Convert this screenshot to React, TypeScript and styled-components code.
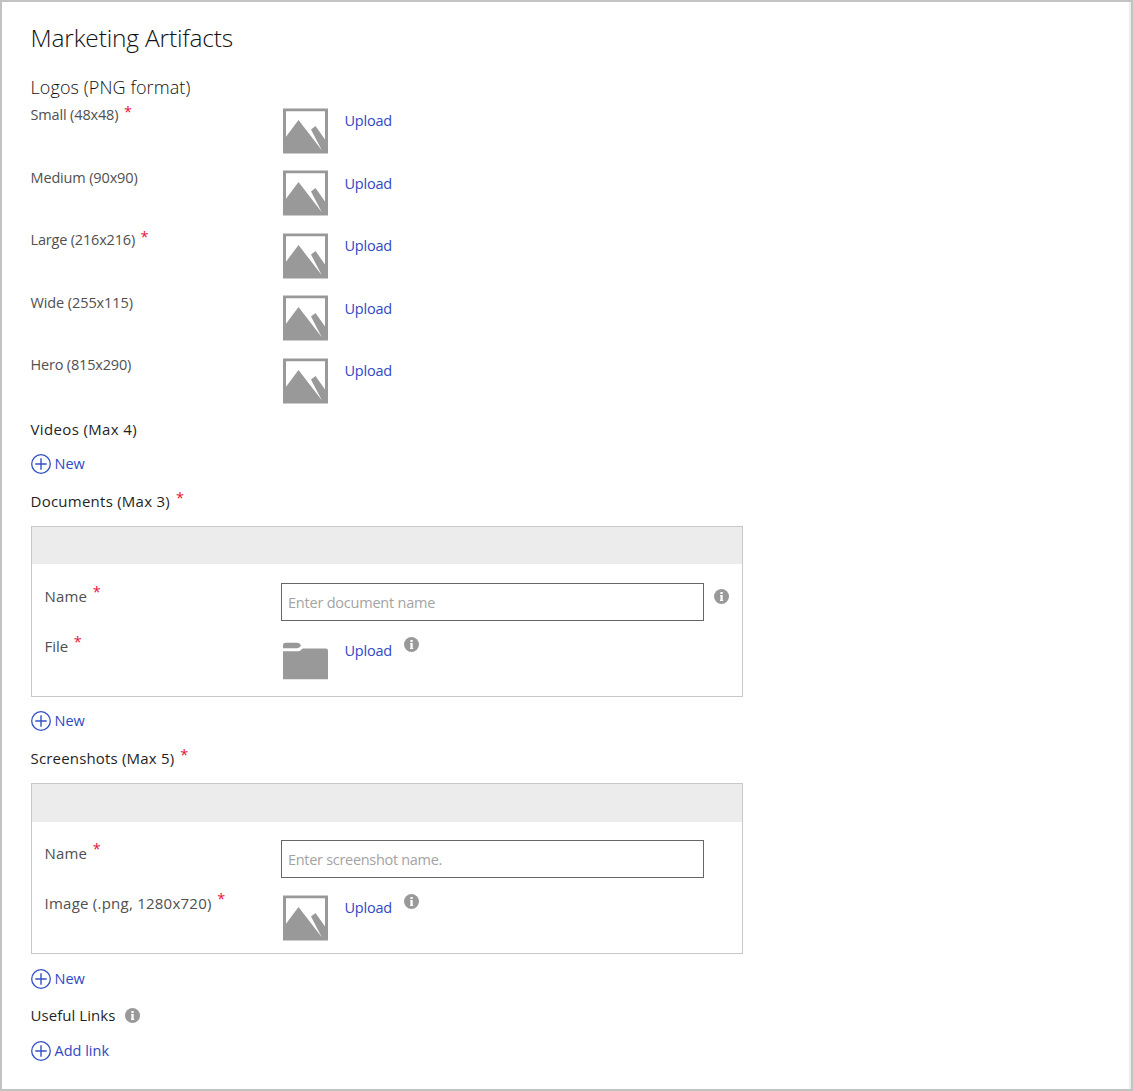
import React from "react";
import styled, { createGlobalStyle } from "styled-components";

const Global = createGlobalStyle`
  * { box-sizing: border-box; }
  body { margin: 0; background: #fff; }
`;

const Page = styled.main`
  width: 1133px;
  height: 1091px;
  border: 2px solid #c3c3c3;
  box-shadow: inset -2px 0 0 #ededed;
  padding: 19px 0 0 29px;
  font-family: "Open Sans", "Noto Sans", sans-serif;
  font-size: 15px;
  color: #1f1f1f;
`;

const Title = styled.h1`
  margin: 0 0 0 -0.5px;
  height: 34px;
  line-height: 34px;
  font-size: 24.5px;
  font-weight: 300;
  letter-spacing: -0.17px;
  color: #111;
  white-space: nowrap;
`;

const Subtitle = styled.h2`
  margin: 20px 0 0 -0.5px;
  height: 24px;
  line-height: 24px;
  font-size: 18px;
  font-weight: 300;
  letter-spacing: 0.1px;
  color: #111;
`;

const Label = styled.span<{ $track?: number }>`
  margin-left: -0.5px;
  line-height: 20px;
  white-space: nowrap;
  color: #505050;
  font-size: 14.5px;
  letter-spacing: ${(p) => p.$track ?? 0}px;
`;

const HeadingLabel = styled(Label)`
  color: #1f1f1f;
  font-size: 15px;
`;

const FieldLabel = styled(Label)`
  font-size: 15px;
`;

const Star = styled.span<{ $gap?: number; $lift?: number }>`
  margin: -${(p) => p.$lift ?? 3}px 0 0 ${(p) => p.$gap ?? 5.5}px;
  line-height: 20px;
  font-size: 14.5px;
  font-weight: 400;
  color: #e8113a;
`;

const LogoList = styled.div`
  padding-top: 8.9px;
`;

const LogoRow = styled.div`
  display: flex;
  height: 62.5px;
`;

const LabelCell = styled.div<{ $width: number }>`
  display: flex;
  align-items: flex-start;
  width: ${(p) => p.$width}px;
`;

const LogoLabelCell = styled(LabelCell)`
  margin-top: -2.6px;
`;

const Link = styled.a`
  margin-left: -0.5px;
  color: #3048c4;
  font-size: 14.5px;
  line-height: 20px;
  white-space: nowrap;
`;

const UploadLink = styled(Link)`
  margin: 3.4px 0 0 16.4px;
  letter-spacing: -0.2px;
`;

const Heading = styled.div<{ $gap: number }>`
  display: flex;
  height: 20px;
  margin-top: ${(p) => p.$gap}px;
`;

const AddRow = styled.div<{ $gap: number }>`
  display: flex;
  align-items: center;
  gap: 4px;
  height: 20px;
  margin-top: ${(p) => p.$gap}px;
`;

const Panel = styled.section`
  width: 712px;
  height: 171px;
  margin-top: 15px;
  border: 1px solid #c8c8c8;
`;

const PanelHeader = styled.div<{ $height: number }>`
  height: ${(p) => p.$height}px;
  background: #ececec;
`;

const Field = styled.div<{ $gap: number }>`
  display: flex;
  align-items: flex-start;
  padding-left: 13px;
  margin-top: ${(p) => p.$gap}px;
`;

const NameCell = styled(LabelCell)`
  padding-top: 3px;
`;

const FileCell = styled(LabelCell)`
  margin-top: -1px;
`;

const FileLink = styled(UploadLink)`
  margin-top: 4px;
`;

const Input = styled.input<{ $track: number }>`
  width: 423px;
  height: 38px;
  padding: 1px 6px 0;
  border: 1px solid #666;
  border-radius: 0;
  font: 14.5px "Open Sans", "Noto Sans", sans-serif;
  letter-spacing: ${(p) => p.$track}px;
  background: #fff;
  &::placeholder { color: #a3a3a3; opacity: 1; }
`;

const InfoSvg = styled.svg<{ $left: number; $top: number }>`
  flex: none;
  margin: ${(p) => p.$top}px 0 0 ${(p) => p.$left}px;
`;

const Glyph = styled.svg<{ $top?: number }>`
  display: block;
  flex: none;
  margin-top: ${(p) => p.$top ?? 0}px;
`;

const Info = ({ left, top }: { left: number; top: number }) => (
  <InfoSvg $left={left} $top={top} width="15" height="15" viewBox="0 0 15 15">
    <circle cx="7.5" cy="7.5" r="7.5" fill="#999" />
    <path d="M6.4 3h2.3v1.9H6.4zM6 5.9h2.7v5.2h.5V12H6v-.9h.4V6.8H6z" fill="#fff" />
  </InfoSvg>
);

const Picture = ({ top }: { top?: number }) => (
  <Glyph $top={top} width="45" height="46" viewBox="0 0 45 46">
    <path fill="#999" fillRule="evenodd" d="M0 .4H45V45.6H0ZM3 3.3V28.7L15.5 12L38.8 42.3L28 21.6L32.5 18L42 31.5V3.3Z" />
  </Glyph>
);

const Folder = ({ top }: { top?: number }) => (
  <Glyph $top={top} width="45" height="38" viewBox="0 0 45 38">
    <path fill="#999" d="M0 5.8V3Q0 .8 2.5 .8H14.5Q17 .8 18 3.6Q16.8 6.2 14 6.2H0ZM0 9.2H14.5Q17.5 9.2 19.8 6.5H43Q45 6.5 45 8.8V37.3H0Z" />
  </Glyph>
);

const Plus = () => (
  <Glyph width="20" height="20" viewBox="0 0 20 20" fill="none" stroke="#3551c8">
    <circle cx="10" cy="10" r="9.3" strokeWidth="1.3" />
    <path d="M10 4.3V15.7M4.3 10H15.7" strokeWidth="1.4" />
  </Glyph>
);

const logos = [
  { text: "Small (48x48)", required: true, track: -0.15 },
  { text: "Medium (90x90)", required: false, track: -0.15 },
  { text: "Large (216x216)", required: true, track: -0.18 },
  { text: "Wide (255x115)", required: false, track: -0.1 },
  { text: "Hero (815x290)", required: false, track: -0.18 },
];

export default function App() {
  return (
    <>
      <Global />
      <Page>
        <Title>Marketing Artifacts</Title>
        <Subtitle>Logos (PNG format)</Subtitle>
        <LogoList>
          {logos.map((l) => (
            <LogoRow key={l.text}>
              <LogoLabelCell $width={252}>
                <Label $track={l.track}>{l.text}</Label>
                {l.required && <Star>*</Star>}
              </LogoLabelCell>
              <Picture />
              <UploadLink>Upload</UploadLink>
            </LogoRow>
          ))}
        </LogoList>
        <Heading $gap={-1}>
          <HeadingLabel $track={0.36}>Videos (Max 4)</HeadingLabel>
        </Heading>
        <AddRow $gap={15}>
          <Plus />
          <Link>New</Link>
        </AddRow>
        <Heading $gap={17}>
          <HeadingLabel $track={0.25}>Documents (Max 3)</HeadingLabel>
          <Star $gap={6}>*</Star>
        </Heading>
        <Panel>
          <PanelHeader $height={37} />
          <Field $gap={19}>
            <NameCell $width={236}>
              <FieldLabel $track={0.2}>Name</FieldLabel>
              <Star $lift={4}>*</Star>
            </NameCell>
            <Input $track={-0.22} placeholder="Enter document name" />
            <Info left={10} top={6} />
          </Field>
          <Field $gap={16}>
            <FileCell $width={238}>
              <FieldLabel>File</FieldLabel>
              <Star $lift={4}>*</Star>
            </FileCell>
            <Folder top={5} />
            <FileLink>Upload</FileLink>
            <Info left={12} top={0} />
          </Field>
        </Panel>
        <AddRow $gap={14}>
          <Plus />
          <Link>New</Link>
        </AddRow>
        <Heading $gap={17}>
          <HeadingLabel $track={0.18}>Screenshots (Max 5)</HeadingLabel>
          <Star $gap={6}>*</Star>
        </Heading>
        <Panel>
          <PanelHeader $height={38} />
          <Field $gap={18}>
            <NameCell $width={236}>
              <FieldLabel $track={0.2}>Name</FieldLabel>
              <Star $lift={4}>*</Star>
            </NameCell>
            <Input $track={-0.3} placeholder="Enter screenshot name." />
          </Field>
          <Field $gap={16}>
            <FileCell $width={238}>
              <FieldLabel $track={0.24}>Image (.png, 1280x720)</FieldLabel>
              <Star $lift={4}>*</Star>
            </FileCell>
            <Picture top={1} />
            <FileLink>Upload</FileLink>
            <Info left={12} top={0} />
          </Field>
        </Panel>
        <AddRow $gap={15}>
          <Plus />
          <Link>New</Link>
        </AddRow>
        <Heading $gap={16}>
          <HeadingLabel $track={0.05}>Useful Links</HeadingLabel>
          <Info left={9.5} top={3} />
        </Heading>
        <AddRow $gap={16}>
          <Plus />
          <Link>Add link</Link>
        </AddRow>
      </Page>
    </>
  );
}
